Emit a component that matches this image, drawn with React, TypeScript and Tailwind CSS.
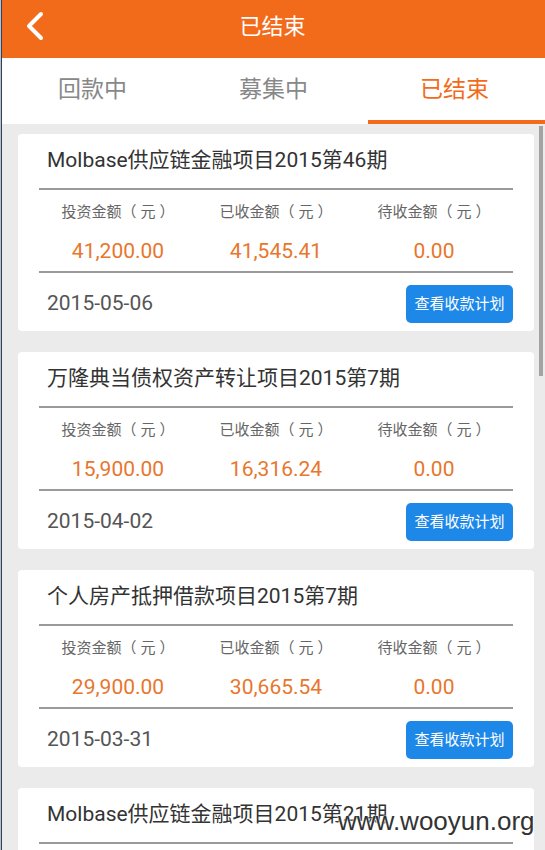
import React from "react";

const cards = [
  { title: "Molbase供应链金融项目2015第46期", a: "41,200.00", b: "41,545.41", c: "0.00", date: "2015-05-06" },
  { title: "万隆典当债权资产转让项目2015第7期", a: "15,900.00", b: "16,316.24", c: "0.00", date: "2015-04-02" },
  { title: "个人房产抵押借款项目2015第7期", a: "29,900.00", b: "30,665.54", c: "0.00", date: "2015-03-31" },
  { title: "Molbase供应链金融项目2015第21期", a: "12,000.00", b: "12,100.00", c: "0.00", date: "2015-03-01" },
];

const font = { fontFamily: 'Roboto, "Noto Sans CJK SC", sans-serif' };

function Card({ c }: { c: (typeof cards)[number] }) {
  return (
    <div className="bg-white rounded-[4px] mx-[18px] mr-[11px] px-[21px] shrink-0">
      <div className="h-[54px] flex items-center pl-[8px] text-[21px] text-[#333] whitespace-nowrap">{c.title}</div>
      <div className="h-[2px] bg-[#9a9a9a]" />
      <div className="grid grid-cols-3 pt-[12px] pb-[6px]">
        {["投资金额", "已收金额", "待收金额"].map((l) => (
          <div key={l} className="text-center text-[15px] leading-[20px] text-[#666] whitespace-nowrap">
            {l}（<span className="mx-[4px]">元</span>）
          </div>
        ))}
        {[c.a, c.b, c.c].map((v, i) => (
          <div key={i} className="text-center text-[21px] leading-[28px] mt-[15px] text-[#e8762d]">{v}</div>
        ))}
      </div>
      <div className="h-[2px] bg-[#9a9a9a]" />
      <div className="flex items-center justify-between pt-[12px] pb-[8px]">
        <div className="pl-[8px] text-[21px] text-[#555]">{c.date}</div>
        <div className="h-[38px] w-[107px] rounded-[5px] bg-[#1e88e8] text-white text-[15px] flex items-center justify-center">查看收款计划</div>
      </div>
    </div>
  );
}

export default function App() {
  return (
    <div className="w-[545px] h-[850px] overflow-hidden flex relative bg-[#ebebeb]" style={font}>
      <div className="w-[1px] bg-[#b8c0cc] shrink-0" />
      <div className="w-[1px] bg-[#34405a] shrink-0" />
      <div className="flex-1 flex flex-col min-w-0">
        <div className="h-[58px] bg-[#f26b1b] flex items-center relative shrink-0">
          <svg className="absolute left-[22px] top-[11px]" width="24" height="30" viewBox="0 0 24 30">
            <path d="M17 3 L5 15 L17 27" fill="none" stroke="white" strokeWidth="4" strokeLinecap="round" strokeLinejoin="round" />
          </svg>
          <div className="flex-1 text-center text-white text-[22px] pr-[2px] pb-[6px]">已结束</div>
        </div>
        <div className="h-[66px] bg-white grid grid-cols-3 shrink-0">
          <div className="flex items-center justify-center text-[23px] text-[#888] pb-[2px]">回款中</div>
          <div className="flex items-center justify-center text-[23px] text-[#888] pb-[2px]">募集中</div>
          <div className="flex flex-col">
            <div className="flex-1 flex items-center justify-center text-[23px] text-[#f26b1b] pt-[2px]">已结束</div>
            <div className="h-[4px] bg-[#f26b1b] ml-[4px]" />
          </div>
        </div>
        <div className="flex flex-col gap-[21px] pt-[10px] -ml-[2px]">
          {cards.map((c, i) => (
            <Card key={i} c={c} />
          ))}
        </div>
      </div>
      <div className="absolute left-[539px] top-[126px] w-[4px] h-[250px] bg-[#a3a3a3]" />
      <div
        className="absolute left-[338px] top-[802px] text-[26px] text-[#333] whitespace-nowrap"
        style={{ fontFamily: '"Liberation Sans", Arial, sans-serif', textShadow: "0 0 2px #fff, 0 0 2px #fff" }}
      >
        www.wooyun.org
      </div>
    </div>
  );
}
